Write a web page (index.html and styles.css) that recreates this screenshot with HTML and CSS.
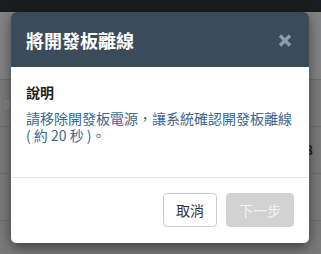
FILE: index.html
```html
<!DOCTYPE html>
<html lang="zh-Hant">
<head>
<meta charset="utf-8">
<link rel="stylesheet" href="styles.css">
</head>
<body>
<div class="page">
  <div class="topbar"></div>
  <div class="table">
    <div class="thead"></div>
    <div class="row"><span class="sort">⇕</span></div>
    <div class="row row-tail"><span class="tail">8</span></div>
    <div class="row"></div>
  </div>
</div>
<div class="modal">
  <div class="modal-header">
    <h4 class="modal-title">將開發板離線</h4>
    <span class="close"><svg width="14" height="13" viewBox="0 0 14 13"><path d="M2 1.5 L12 11.5 M12 1.5 L2 11.5" stroke="#8c9db0" stroke-width="3.4" stroke-linecap="butt"/></svg></span>
  </div>
  <div class="modal-body">
    <div class="label">說明</div>
    <p class="desc"><span class="line">請移除開發板電源，讓系統確認開發板離線</span><span class="line">( 約 20 秒 )。</span></p>
  </div>
  <div class="modal-footer">
    <button class="btn btn-default">取消</button>
    <button class="btn btn-disabled" disabled>下一步</button>
  </div>
</div>
</body>
</html>
```

FILE: styles.css
```css
* { box-sizing: border-box; }
html, body {
  margin: 0;
  padding: 0;
  width: 321px;
  height: 254px;
  overflow: hidden;
  font-family: "Noto Sans CJK TC", "Liberation Sans", sans-serif;
  background: #7a7a7a;
}
.page { width: 321px; height: 254px; overflow: hidden; }
.topbar { height: 12px; background: #1b1d20; }
.table { display: flex; flex-direction: column; }
.thead { height: 68px; background: #848484; border-bottom: 1px solid #6f6f6f; }
.row {
  height: 47px;
  background: #7b7b7b;
  border-bottom: 1px solid #6e6e6e;
  display: flex;
  align-items: center;
  justify-content: space-between;
  padding: 0 2px;
}
.sort { color: #8f8f8f; font-size: 12px; }
.row-tail { justify-content: flex-end; }
.tail { color: #222; font-size: 13px; font-weight: bold; margin-right: 6px; line-height: 16px; }

.modal {
  position: absolute;
  left: 11px;
  top: 12px;
  width: 298px;
  height: 231px;
  background: #fff;
  border-radius: 5px;
  overflow: hidden;
  box-shadow: 0 4px 14px rgba(0,0,0,0.5);
  display: flex;
  flex-direction: column;
}
.modal-header {
  height: 55px;
  background: #3c4b5a;
  display: flex;
  align-items: center;
  justify-content: space-between;
  padding: 0 17px 0 15px;
}
.modal-title {
  margin: 0;
  color: #fff;
  font-size: 18px;
  font-weight: bold;
  line-height: 22px;
}
.close { display: flex; margin-top: 1px; }
.modal-body {
  height: 111px;
  padding: 15px 15px 0 15px;
  border-bottom: 1px solid #e5e5e5;
}
.label {
  font-size: 14px;
  font-weight: bold;
  color: #222;
  line-height: 20px;
}
.desc {
  margin: 8px 0 0 0;
  font-size: 14px;
  color: #3a6790;
  display: flex;
  flex-direction: column;
  gap: 0;
}
.line { display: block; height: 16.5px; line-height: 16.5px; }
.modal-footer {
  flex: 1;
  display: flex;
  justify-content: flex-end;
  align-items: flex-start;
  gap: 9px;
  padding: 15px 15px 0 0;
}
.btn {
  height: 34px;
  padding: 0 12px;
  font-family: "Noto Sans CJK TC", "Liberation Sans", sans-serif;
  font-size: 14px;
  border-radius: 4px;
  line-height: 32px;
}
.btn-default {
  background: #fff;
  border: 1px solid #cccccc;
  color: #333;
}
.btn-disabled {
  background: #d2d2d2;
  border: 1px solid #d2d2d2;
  color: #f2f2f2;
}
```
